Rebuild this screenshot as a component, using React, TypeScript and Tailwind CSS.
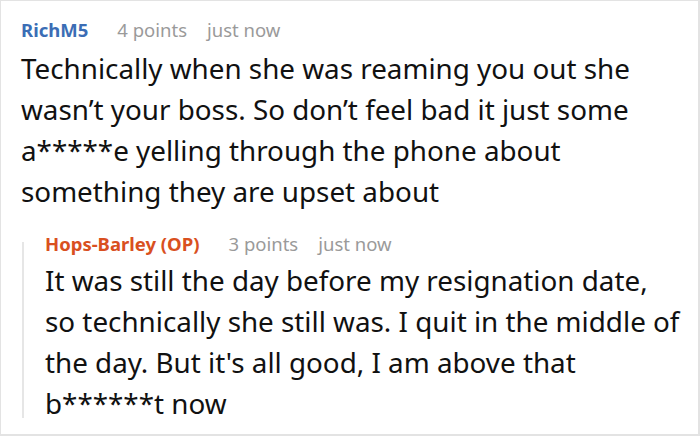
import React from 'react';

const font = { fontFamily: '"Noto Sans", "Open Sans", sans-serif' };

interface CommentProps {
  author: string;
  points: string;
  time: string;
  authorClass: string;
  lines: string[];
}

const CommentHeader: React.FC<Omit<CommentProps, 'lines'>> = ({ author, points, time, authorClass }) => (
  <div className="flex items-baseline text-[18.5px] leading-[24px]">
    <span className={`font-bold ${authorClass}`}>{author}</span>
    <span className="ml-[29px] text-[#9a9a9a]">{points}</span>
    <span className="ml-[20px] text-[#9a9a9a]">{time}</span>
  </div>
);

const CommentBody: React.FC<{ lines: string[] }> = ({ lines }) => (
  <div className="text-[27.8px] leading-[41px] text-[#111]">
    {lines.map((l, i) => (
      <div key={i} className="whitespace-nowrap">{l}</div>
    ))}
  </div>
);

export default function App() {
  return (
    <div
      style={font}
      className="w-[700px] h-[436px] bg-white border-t border-l border-[#e3e3e3] border-r-2 border-b-2 overflow-hidden pl-[20px] pt-[17px]"
    >
      <CommentHeader author="RichM5" points="4 points" time="just now" authorClass="text-[#3b6db5]" />
      <div className="mt-[6px]">
        <CommentBody
          lines={[
            'Technically when she was reaming you out she',
            'wasn’t your boss. So don’t feel bad it just some',
            'a*****e yelling through the phone about',
            'something they are upset about',
          ]}
        />
      </div>

      <div className="flex mt-[20px]">
        <div className="w-[2px] bg-[#e6e6e6] ml-[1px] mt-[10px] mb-[6px]" />
        <div className="ml-[21px]">
          <CommentHeader author="Hops-Barley (OP)" points="3 points" time="just now" authorClass="text-[#d9501f]" />
          <div className="mt-[4px]">
            <CommentBody
              lines={[
                'It was still the day before my resignation date,',
                'so technically she still was. I quit in the middle of',
                'the day. But it\'s all good, I am above that',
                'b******t now',
              ]}
            />
          </div>
        </div>
      </div>
    </div>
  );
}
